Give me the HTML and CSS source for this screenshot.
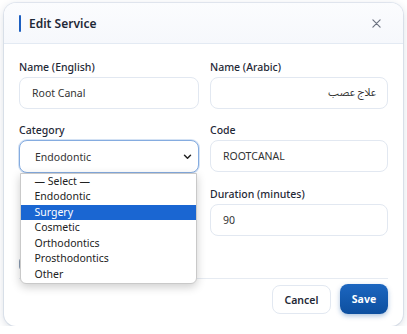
FILE: index.html
```html
<!DOCTYPE html>
<html lang="en">
<head>
    <meta charset="UTF-8">
    <meta name="viewport" content="width=device-width, initial-scale=1.0">
    <title>Edit Service</title>
    <link rel="stylesheet" href="styles.css">
</head>
<body>
    <div class="modal">
        <div class="modal-header">
            <span class="accent"></span>
            <h2>Edit Service</h2>
            <button class="close" aria-label="Close">
                <svg width="9" height="9" viewBox="0 0 10 10"><path d="M1 1L9 9M9 1L1 9" stroke="#6b7280" stroke-width="1.3" stroke-linecap="round"/></svg>
            </button>
        </div>

        <div class="modal-body">
            <div class="field">
                <label>Name (English)</label>
                <div class="input">Root Canal</div>
            </div>
            <div class="field">
                <label>Name (Arabic)</label>
                <div class="input rtl" dir="rtl">علاج عصب</div>
            </div>
            <div class="field">
                <label>Category</label>
                <div class="input select focused">
                    <span>Endodontic</span>
                    <svg width="9" height="6" viewBox="0 0 10 7"><path d="M1.5 1.5L5 5L8.5 1.5" fill="none" stroke="#222" stroke-width="1.7" stroke-linecap="round" stroke-linejoin="round"/></svg>
                    <ul class="dropdown">
                        <li>— Select —</li>
                        <li>Endodontic</li>
                        <li class="active">Surgery</li>
                        <li>Cosmetic</li>
                        <li>Orthodontics</li>
                        <li>Prosthodontics</li>
                        <li>Other</li>
                    </ul>
                </div>
            </div>
            <div class="field">
                <label>Code</label>
                <div class="input">ROOTCANAL</div>
            </div>
            <div class="field"></div>
            <div class="field">
                <label>Duration (minutes)</label>
                <div class="input">90</div>
            </div>
            <div class="field full">
                <span class="box"></span>
            </div>
        </div>

        <div class="modal-footer">
            <button class="btn btn-cancel">Cancel</button>
            <button class="btn btn-save">Save</button>
        </div>
    </div>
</body>
</html>
```

FILE: styles.css
```css
* {
    box-sizing: border-box;
}
body {
    margin: 0;
    padding: 3px 4px 0 4px;
    background-color: #ffffff;
    font-family: "Noto Sans", "DejaVu Sans", sans-serif;
    color: #1f2937;
}
.modal {
    width: 399px;
    height: 323px;
    background-color: #ffffff;
    border-radius: 12px;
    box-shadow: 0 2px 8px rgba(30, 50, 90, 0.18), 0 0 0 1px rgba(220, 228, 240, 0.6);
    display: flex;
    flex-direction: column;
}
.modal-header {
    height: 41px;
    flex-shrink: 0;
    display: flex;
    align-items: center;
    padding: 0 15px;
    border-bottom: 1px solid #e3eaf3;
    background: linear-gradient(180deg, #fbfcfe, #f6f8fc);
    border-radius: 12px 12px 0 0;
}
.accent {
    width: 2px;
    height: 17px;
    background-color: #1d5fc0;
    border-radius: 1px;
    margin-right: 8px;
}
.modal-header h2 {
    margin: 0;
    font-size: 12px;
    font-weight: 600;
    color: #1f2937;
    flex: 1;
}
.close {
    border: none;
    background: none;
    padding: 0;
    width: 9px;
    height: 9px;
    margin-right: 7px;
    display: flex;
}
.modal-body {
    display: grid;
    grid-template-columns: 180px 178px;
    grid-auto-rows: min-content;
    column-gap: 11px;
    row-gap: 13px;
    padding: 15px 15px 0 15px;
    flex: 1;
}
.field {
    display: flex;
    flex-direction: column;
    position: relative;
}
.field.full {
    grid-column: 1 / 3;
    padding-top: 9px;
}
.field label {
    font-size: 10.5px;
    font-weight: 500;
    line-height: 16px;
    margin-bottom: 2px;
    color: #1f2937;
}
.input {
    height: 32px;
    border: 1px solid #e2e8f1;
    border-radius: 8px;
    padding: 0 12px;
    display: flex;
    align-items: center;
    font-size: 10.5px;
    color: #333;
    background-color: #fff;
    position: relative;
}
.input.rtl {
    font-family: "Noto Sans Arabic", "Noto Sans", "DejaVu Sans", sans-serif;
    padding-right: 11px;
}
.select {
    height: 33px;
    justify-content: space-between;
    padding: 0 6px 0 15px;
}
.focused {
    border: 1.5px solid #85ace0;
    box-shadow: 0 0 0 1px rgba(133, 172, 224, 0.35);
}
.dropdown {
    position: absolute;
    top: 31.5px;
    left: -0.5px;
    width: 177px;
    margin: 0;
    padding: 0;
    list-style: none;
    background-color: #fff;
    border: 1px solid #c9c9c9;
    border-radius: 0 0 6px 6px;
    box-shadow: 0 3px 10px rgba(0, 0, 0, 0.2);
    z-index: 5;
}
.dropdown li {
    height: 15.6px;
    line-height: 15.6px;
    padding-left: 14px;
    font-size: 10.5px;
    color: #222;
}
.dropdown li.active {
    background-color: #1a66d2;
    color: #fff;
}
.box {
    width: 12px;
    height: 12px;
    border: 1px solid #8a9bb3;
    border-radius: 3px;
}
.modal-footer {
    flex-shrink: 0;
    margin: 0 15px;
    border-top: 1px solid #e6ebf2;
    padding: 6px 0 12px 0;
    display: flex;
    justify-content: flex-end;
    gap: 9px;
}
.btn {
    height: 29px;
    border-radius: 8px;
    font-family: "Noto Sans", sans-serif;
    font-size: 10.5px;
    font-weight: 600;
    cursor: pointer;
}
.btn-cancel {
    width: 59px;
    background-color: #fff;
    border: 1px solid #e2e8f1;
    color: #1f2937;
}
.btn-save {
    width: 48px;
    height: 30px;
    margin-top: -1px;
    border: none;
    color: #fff;
    font-weight: 700;
    background: linear-gradient(180deg, #1c66c0, #0d4f9f);
    box-shadow: 0 2px 5px rgba(13, 79, 159, 0.35);
}
```
